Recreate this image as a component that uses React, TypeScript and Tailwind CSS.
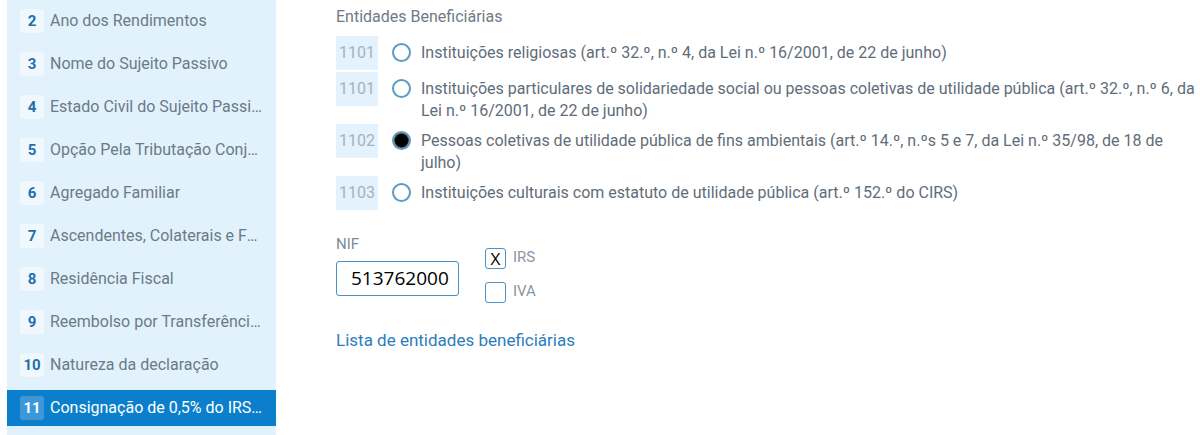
const menu = [
  { n: 2, label: "Ano dos Rendimentos" },
  { n: 3, label: "Nome do Sujeito Passivo" },
  { n: 4, label: "Estado Civil do Sujeito Passivo" },
  { n: 5, label: "Opção Pela Tributação Conjunta" },
  { n: 6, label: "Agregado Familiar" },
  { n: 7, label: "Ascendentes, Colaterais e Falecidos" },
  { n: 8, label: "Residência Fiscal" },
  { n: 9, label: "Reembolso por Transferência Bancária" },
  { n: 10, label: "Natureza da declaração" },
  { n: 11, label: "Consignação de 0,5% do IRS / IVA", active: true },
];

const entities = [
  { code: "1101", text: "Instituições religiosas (art.º 32.º, n.º 4, da Lei n.º 16/2001, de 22 de junho)" },
  {
    code: "1101",
    text: "Instituições particulares de solidariedade social ou pessoas coletivas de utilidade pública (art.º 32.º, n.º 6, da Lei n.º 16/2001, de 22 de junho)",
  },
  {
    code: "1102",
    text: "Pessoas coletivas de utilidade pública de fins ambientais (art.º 14.º, n.ºs 5 e 7, da Lei n.º 35/98, de 18 de julho)",
    checked: true,
  },
  { code: "1103", text: "Instituições culturais com estatuto de utilidade pública (art.º 152.º do CIRS)" },
];

function Sidebar() {
  return (
    <aside className="ml-[7px] w-[269px] shrink-0 bg-[#e2f2fc] pt-[3px]">
      {menu.map((item) => (
        <div
          key={item.n}
          className={`mb-[7px] flex h-[36px] items-center pl-[13px] pr-3 ${item.active ? "bg-[#0b7fcc]" : ""}`}
        >
          <span
            className={`flex h-[24px] w-[24px] shrink-0 items-center justify-center rounded-[3px] text-[15px] font-bold ${
              item.active ? "bg-[#3c98d8] text-white" : "bg-[#f0f8fe] text-[#1e6fae]"
            }`}
          >
            {item.n}
          </span>
          <span
            className={`ml-[6px] truncate text-[16px] ${item.active ? "text-white" : "text-[#6c7a87]"}`}
          >
            {item.label}
          </span>
        </div>
      ))}
    </aside>
  );
}

function Radio({ checked }: { checked?: boolean }) {
  return (
    <span className="mt-[7px] flex h-[19px] w-[19px] shrink-0 items-center justify-center rounded-full border-[2px] border-[#5b9cc6] bg-white">
      {checked && <span className="h-[13px] w-[13px] rounded-full bg-black shadow-[0_0_0_1px_#333]" />}
    </span>
  );
}

function Checkbox({ label, checked }: { label: string; checked?: boolean }) {
  return (
    <div className="flex items-center">
      <span className="flex h-[21px] w-[21px] items-center justify-center rounded-[3px] border-[1.5px] border-[#4d93c3] bg-white text-[17px] leading-none text-black [font-family:'Open_Sans',sans-serif]">
        {checked ? "X" : ""}
      </span>
      <span className="ml-[7px] mt-[-3px] text-[15px] text-[#8a96a1]">{label}</span>
    </div>
  );
}

export default function App() {
  return (
    <div className="flex h-[435px] w-[1200px] overflow-hidden bg-white [font-family:Roboto,'Noto_Sans',sans-serif]">
      <Sidebar />
      <main className="min-w-0 flex-1 pl-[60px] pr-[4px]">
        <h2 className="mt-[6px] text-[16px] leading-[22px] text-[#6f7b86]">Entidades Beneficiárias</h2>
        <div className="mt-[8px] flex flex-col gap-[2px]">
          {entities.map((e, i) => (
            <div key={i} className="flex items-start">
              <span className="flex h-[34px] w-[42px] shrink-0 items-center justify-center bg-[#e3f2fc] text-[16px] text-[#a3b4c0]">
                {e.code}
              </span>
              <span className="ml-[14px]">
                <Radio checked={e.checked} />
              </span>
              <p className="ml-[10px] pt-[6px] text-[16px] leading-[22px] text-[#5f6d7a]">{e.text}</p>
            </div>
          ))}
        </div>
        <div className="mt-[24px] flex items-start">
          <div>
            <label className="block text-[15px] leading-[20px] text-[#7d8a95]">NIF</label>
            <div className="mt-[7px] flex h-[35px] w-[123px] items-center rounded-[3px] border-[1.5px] border-[#4a90c1] pl-[14px] text-[19px] text-black [font-family:'Open_Sans',sans-serif]">
              513762000
            </div>
          </div>
          <div className="ml-[26px] mt-[14px] flex flex-col gap-[13px]">
            <Checkbox label="IRS" checked />
            <Checkbox label="IVA" />
          </div>
        </div>
        <a className="mt-[25px] block text-[17px] text-[#2d7dbb]">Lista de entidades beneficiárias</a>
      </main>
    </div>
  );
}
